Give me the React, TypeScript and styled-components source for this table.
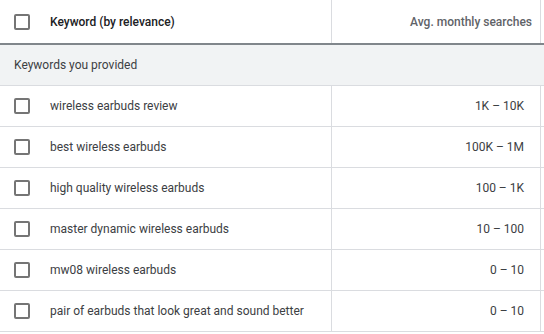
import React from 'react'
import styled, { createGlobalStyle } from 'styled-components'

const GlobalStyle = createGlobalStyle`
  body {
    margin: 0;
    background: #ffffff;
    font-family: Roboto, 'Liberation Sans', Arial, sans-serif;
  }
`

const rows = [
  { keyword: 'wireless earbuds review', searches: '1K – 10K' },
  { keyword: 'best wireless earbuds', searches: '100K – 1M' },
  { keyword: 'high quality wireless earbuds', searches: '100 – 1K' },
  { keyword: 'master dynamic wireless earbuds', searches: '10 – 100' },
  { keyword: 'mw08 wireless earbuds', searches: '0 – 10' },
  { keyword: 'pair of earbuds that look great and sound better', searches: '0 – 10' },
]

const App: React.FC = () => {
  return (
    <>
      <GlobalStyle />
      <Table>
        <HeaderRow>
          <KeywordCell>
            <Checkbox />
            <HeaderLabel>Keyword (by relevance)</HeaderLabel>
          </KeywordCell>
          <NumberCell header>
            <HeaderLabel muted>Avg. monthly searches</HeaderLabel>
          </NumberCell>
          <Cell />
        </HeaderRow>
        <GroupRow>Keywords you provided</GroupRow>
        {rows.map((row) => (
          <Row key={row.keyword}>
            <KeywordCell>
              <Checkbox />
              <CellText>{row.keyword}</CellText>
            </KeywordCell>
            <NumberCell>
              <CellText>{row.searches}</CellText>
            </NumberCell>
            <Cell />
          </Row>
        ))}
      </Table>
    </>
  )
}

export default App

const Table = styled.div`
  width: 544px;
  display: flex;
  flex-direction: column;
  color: #3c4043;
  font-size: 12px;
`

const Row = styled.div`
  display: grid;
  grid-template-columns: 332px 209px 1fr;
  height: 41px;
  border-bottom: 1px solid #dadce0;
  box-sizing: border-box;
`

const HeaderRow = styled(Row)`
  height: 45px;
  border-bottom: 2px solid #80868b;
`

const GroupRow = styled.div`
  display: flex;
  align-items: center;
  height: 41px;
  box-sizing: border-box;
  padding-left: 14px;
  background: #f1f3f4;
  border-bottom: 1px solid #dadce0;
`

const Cell = styled.div`
  display: flex;
  align-items: center;
  min-width: 0;
`

const KeywordCell = styled(Cell)`
  padding-left: 14px;
  gap: 20px;
  border-right: 1px solid #dadce0;
`

const NumberCell = styled(Cell)<{ header?: boolean }>`
  justify-content: flex-end;
  padding-right: ${({ header }) => (header ? '8px' : '16px')};
  border-right: 1px solid #dadce0;
`

const Checkbox = styled.span`
  display: block;
  flex: none;
  width: 16px;
  height: 16px;
  box-sizing: border-box;
  border: 2px solid #757575;
  border-radius: 2px;
`

const HeaderLabel = styled.span<{ muted?: boolean }>`
  font-weight: 500;
  color: ${({ muted }) => (muted ? '#5f6368' : '#202124')};
  white-space: nowrap;
`

const CellText = styled.span`
  color: #3c4043;
  white-space: nowrap;
`
